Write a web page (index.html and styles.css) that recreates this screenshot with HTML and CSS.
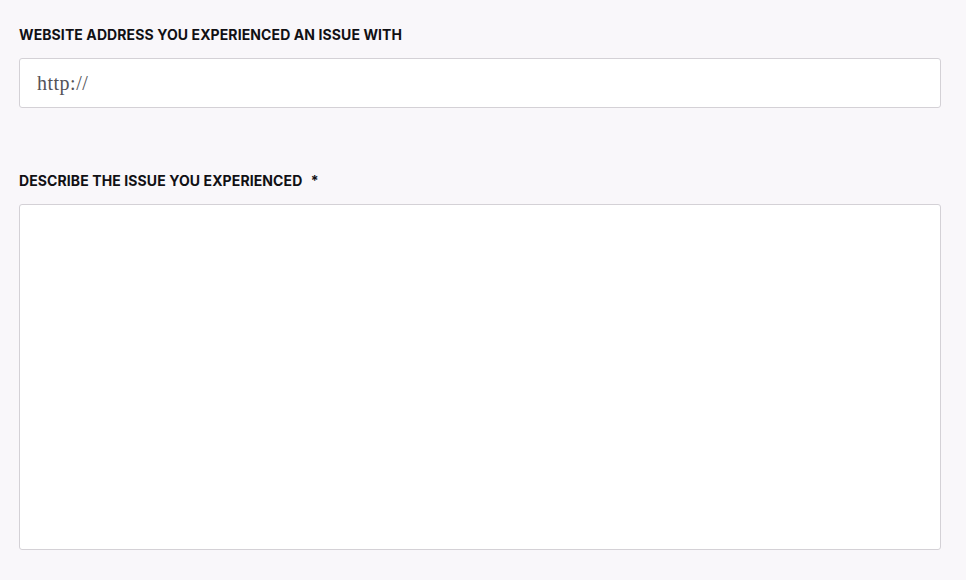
FILE: index.html
```html
<!DOCTYPE html>
<html>
<head>
<meta charset="utf-8">
<link rel="stylesheet" href="styles.css">
</head>
<body>
<form class="form">
  <div class="field">
    <label class="label" for="url">Website address you experienced an issue with</label>
    <input class="input" id="url" type="text" value="http://">
  </div>
  <div class="field field-desc">
    <label class="label" for="desc">Describe the issue you experienced <span class="req">*</span></label>
    <textarea class="textarea" id="desc"></textarea>
  </div>
</form>
</body>
</html>
```
FILE: styles.css
```css
html, body {
  margin: 0;
  padding: 0;
  background: #f9f7fa;
}
.form {
  padding: 26px 25px 0 19px;
  display: flex;
  flex-direction: column;
}
.field {
  display: flex;
  flex-direction: column;
}
.field-desc {
  margin-top: 64px;
}
.label {
  font-family: Inter, "Liberation Sans", sans-serif;
  font-weight: 700;
  font-size: 14px;
  line-height: 18px;
  text-transform: uppercase;
  color: #111014;
  letter-spacing: 0.1px;
  margin-bottom: 14px;
}
.req {
  margin-left: 5px;
}
.input {
  box-sizing: border-box;
  height: 50px;
  width: 100%;
  border: 1px solid #d4d1d6;
  border-radius: 3px;
  background: #fff;
  padding: 0 17px;
  font-family: "Liberation Serif", "DejaVu Serif", serif;
  font-size: 20px;
  letter-spacing: 0.5px;
  color: #555358;
  outline: none;
}
.textarea {
  box-sizing: border-box;
  height: 346px;
  width: 100%;
  border: 1px solid #d4d1d6;
  border-radius: 3px;
  background: #fff;
  resize: none;
  margin: 0;
  outline: none;
}
```
